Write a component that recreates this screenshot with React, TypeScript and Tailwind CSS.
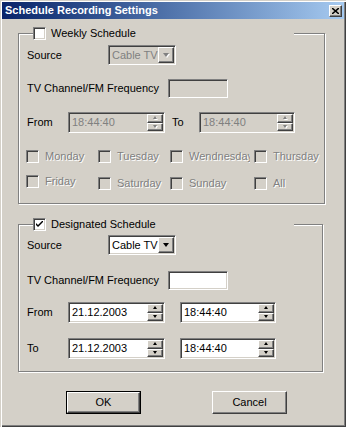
import React from "react";

const sunken =
  "border border-t-[#808080] border-l-[#808080] border-b-white border-r-white shadow-[inset_1px_1px_0_#404040,inset_-1px_-1px_0_#d4d0c8]";
const raised =
  "border border-t-white border-l-white border-b-[#404040] border-r-[#404040] shadow-[inset_-1px_-1px_0_#808080]";
const etched =
  "border border-[#808080] shadow-[inset_1px_1px_0_#fff,1px_1px_0_#fff]";
const grayText = "text-[#808080] [text-shadow:1px_1px_0_#fff]";

const Arrow = ({ up, disabled, size = 7 }: { up?: boolean; disabled?: boolean; size?: number }) => (
  <svg width={size} height={Math.ceil(size / 2) + 1} viewBox={`0 0 ${size} ${Math.ceil(size / 2) + 1}`} className="block">
    {disabled && (
      <polygon
        points={up ? `1,${Math.ceil(size / 2) + 1} ${size},${Math.ceil(size / 2) + 1} ${(size + 1) / 2},1` : `1,1 ${size},1 ${(size + 1) / 2},${Math.ceil(size / 2) + 1}`}
        fill="#fff"
      />
    )}
    <polygon
      points={up ? `0,${Math.ceil(size / 2)} ${size - 1},${Math.ceil(size / 2)} ${(size - 1) / 2},0` : `0,0 ${size - 1},0 ${(size - 1) / 2},${Math.ceil(size / 2)}`}
      fill={disabled ? "#808080" : "#000"}
    />
  </svg>
);

const Check = ({ checked, disabled }: { checked?: boolean; disabled?: boolean }) => (
  <div className={`${sunken} flex size-[13px] shrink-0 items-center justify-center ${disabled ? "bg-[#d4d0c8]" : "bg-white"}`}>
    {checked && (
      <svg width="7" height="7" viewBox="0 0 7 7" className="block">
        <path d="M0 2 L0 4 L2 6 L7 1 L7 -1 L2 4 Z" fill="#000" />
      </svg>
    )}
  </div>
);

const CheckItem = ({ label, disabled, className = "" }: { label: string; disabled?: boolean; className?: string }) => (
  <div className={`flex items-center gap-[6px] ${className}`}>
    <Check disabled={disabled} />
    <span className={`whitespace-nowrap ${disabled ? grayText : ""}`}>{label}</span>
  </div>
);

const Combo = ({ disabled }: { disabled?: boolean }) => (
  <div className={`${sunken} flex h-[20px] w-[68px] items-center p-[1px] ${disabled ? "bg-[#d4d0c8]" : "bg-white"}`}>
    <span className={`flex-1 pl-[2px] ${disabled ? "text-[#808080]" : "text-black"}`}>Cable TV</span>
    <div className={`${raised} flex h-full w-[16px] items-center justify-center bg-[#d4d0c8]`}>
      <Arrow disabled={disabled} />
    </div>
  </div>
);

const SpinBtn = ({ up, disabled }: { up?: boolean; disabled?: boolean }) => (
  <div className={`${raised} flex flex-1 items-center justify-center bg-[#d4d0c8]`}>
    <Arrow up={up} disabled={disabled} size={5} />
  </div>
);

const Spin = ({ value, disabled, className }: { value: string; disabled?: boolean; className: string }) => (
  <div className={`${sunken} flex h-[21px] p-[1px] ${disabled ? "bg-[#d4d0c8]" : "bg-white"} ${className}`}>
    <div className={`flex flex-1 items-center pl-[2px] ${disabled ? "text-[#808080]" : "text-black"}`}>{value}</div>
    <div className="flex w-[16px] flex-col">
      <SpinBtn up disabled={disabled} />
      <SpinBtn disabled={disabled} />
    </div>
  </div>
);

const Caption = ({ label, checked }: { label: string; checked?: boolean }) => (
  <div className="absolute top-[-7px] left-[14px] flex h-[13px] w-[261px] items-center gap-[5px] bg-[#d4d0c8]">
    <Check checked={checked} />
    <span>{label}</span>
  </div>
);

const Button = ({ label, isDefault }: { label: string; isDefault?: boolean }) => (
  <div className={`h-[23px] w-[75px] ${isDefault ? "border border-black" : ""}`}>
    <div className={`${raised} flex h-full items-center justify-center`}>{label}</div>
  </div>
);

export default function App() {
  return (
    <div className="h-[427px] w-[346px] bg-[#d4d0c8] p-[2px] font-['Liberation_Sans',Arial,sans-serif] text-[11px] leading-[13px] text-black shadow-[inset_1px_1px_0_#d4d0c8,inset_2px_2px_0_#fff,inset_-1px_-1px_0_#404040,inset_-2px_-2px_0_#808080]">
      <div className="flex h-[17px] items-center justify-between bg-gradient-to-r from-[#0a246a] to-[#a6caf0] pr-[2px] pl-[3px]">
        <span className="font-bold text-white">Schedule Recording Settings</span>
        <div className={`${raised} flex h-[12px] w-[13px] items-center justify-center bg-[#d4d0c8]`}>
          <svg width="7" height="6" viewBox="0 0 7 6" className="block">
            <path d="M0 0 L7 6 M7 0 L0 6" stroke="#000" strokeWidth="1.5" />
          </svg>
        </div>
      </div>

      <div className={`${etched} relative mt-[14px] ml-[16px] h-[171px] w-[307px] pt-[11px] pl-[8px]`}>
        <Caption label="Weekly Schedule" />
        <div className="flex h-[20px] items-center">
          <span className="w-[81px]">Source</span>
          <Combo disabled />
        </div>
        <div className="mt-[14px] flex h-[19px] items-center">
          <span className="w-[141px]">TV Channel/FM Frequency</span>
          <div className={`${sunken} h-[19px] w-[60px] bg-[#d4d0c8]`} />
        </div>
        <div className="mt-[14px] flex h-[21px] items-center">
          <span className="w-[41px]">From</span>
          <Spin value="18:44:40" disabled className="w-[97px]" />
          <span className="w-[34px] pl-[7px]">To</span>
          <Spin value="18:44:40" disabled className="w-[96px]" />
        </div>
        <div className="mt-[17px] -ml-[1px] grid grid-cols-[72px_72px_84px_60px] gap-y-[14px]">
          <CheckItem label="Monday" disabled />
          <CheckItem label="Tuesday" disabled />
          <CheckItem label="Wendnesday" disabled className="w-[80px] overflow-hidden" />
          <CheckItem label="Thursday" disabled />
          <div className="-mt-[2px]">
            <CheckItem label="Friday" disabled />
          </div>
          <CheckItem label="Saturday" disabled />
          <CheckItem label="Sunday" disabled />
          <CheckItem label="All" disabled />
        </div>
      </div>

      <div className={`${etched} relative mt-[20px] ml-[16px] h-[148px] w-[305px] pt-[10px] pl-[8px]`}>
        <Caption label="Designated Schedule" checked />
        <div className="flex h-[20px] items-center">
          <span className="w-[81px]">Source</span>
          <Combo />
        </div>
        <div className="mt-[16px] flex h-[19px] items-center">
          <span className="w-[141px]">TV Channel/FM Frequency</span>
          <div className={`${sunken} h-[19px] w-[60px] bg-white`} />
        </div>
        <div className="mt-[12px] flex h-[21px] items-center">
          <span className="w-[41px]">From</span>
          <Spin value="21.12.2003" className="w-[97px]" />
          <Spin value="18:44:40" className="ml-[15px] w-[96px]" />
        </div>
        <div className="mt-[15px] flex h-[21px] items-center">
          <span className="w-[41px]">To</span>
          <Spin value="21.12.2003" className="w-[97px]" />
          <Spin value="18:44:40" className="ml-[15px] w-[96px]" />
        </div>
      </div>

      <div className="mt-[19px] ml-[64px] flex gap-[71px]">
        <Button label="OK" isDefault />
        <Button label="Cancel" />
      </div>
    </div>
  );
}
